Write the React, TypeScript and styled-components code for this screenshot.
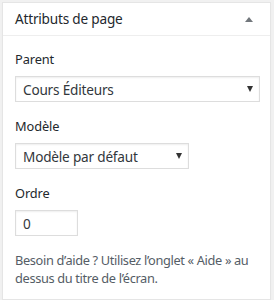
import styled, { createGlobalStyle } from 'styled-components'

const Global = createGlobalStyle`
    html, body {
        margin: 0;
        background: #f1f1f1;
    }
    body {
        font-family: "Noto Sans", "Open Sans", sans-serif;
        font-size: 13px;
        color: #23282d;
    }
`

export default function App() {
    return (
        <>
            <Global />
            <Page>
                <Box>
                    <Header>
                        <Title>Attributs de page</Title>
                        <Toggle aria-label="Replier" />
                    </Header>
                    <Inside>
                        <Label>Parent</Label>
                        <Select $width={245}>
                            <span>Cours Éditeurs</span>
                            <Caret />
                        </Select>
                        <Label>Modèle</Label>
                        <Select $width={174}>
                            <span>Modèle par défaut</span>
                            <Caret />
                        </Select>
                        <Label>Ordre</Label>
                        <NumberInput>0</NumberInput>
                        <Help>Besoin d’aide ? Utilisez l’onglet « Aide » au dessus du titre de l’écran.</Help>
                    </Inside>
                </Box>
            </Page>
        </>
    )
}

const Page = styled.div`
    padding: 2px 3px 3px 2px;
`

const Box = styled.div`
    background: #fff;
    border: 1px solid #e5e5e5;
    box-shadow: 0 1px 1px rgba(0, 0, 0, 0.04);
`

const Header = styled.div`
    display: flex;
    align-items: center;
    justify-content: space-between;
    height: 32px;
    padding: 0 12px;
    border-bottom: 1px solid #eee;
`

const Title = styled.h2`
    margin: 0;
    font-size: 13.6px;
    font-weight: 400;
    line-height: 1.4;
    letter-spacing: -0.2px;
    color: #23282d;
`

const Toggle = styled.span`
    width: 0;
    height: 0;
    margin-right: 5px;
    border-left: 4px solid transparent;
    border-right: 4px solid transparent;
    border-bottom: 5px solid #72777c;
`

const Inside = styled.div`
    display: flex;
    flex-direction: column;
    align-items: flex-start;
    padding: 14px 12px 12px;
`

const Label = styled.div`
    font-size: 12.8px;
    line-height: 18px;
    margin-bottom: 8px;
    letter-spacing: -0.1px;
    color: #23282d;
`

const Select = styled.div<{ $width: number }>`
    box-sizing: border-box;
    display: flex;
    align-items: center;
    justify-content: space-between;
    width: ${p => p.$width}px;
    height: 26px;
    padding: 0 6px 0 7px;
    margin-bottom: 15px;
    border: 1px solid #ddd;
    box-shadow: inset 0 1px 2px rgba(0, 0, 0, 0.07);
    background: #fff;
    color: #32373c;
    font-size: 13.6px;
    letter-spacing: -0.2px;
`

const Caret = styled.span`
    width: 0;
    height: 0;
    border-left: 3.5px solid transparent;
    border-right: 3.5px solid transparent;
    border-top: 6px solid #333;
`

const NumberInput = styled.div`
    box-sizing: border-box;
    width: 63px;
    height: 26px;
    padding: 0 7px;
    margin-bottom: 15px;
    display: flex;
    align-items: center;
    border: 1px solid #ddd;
    box-shadow: inset 0 1px 2px rgba(0, 0, 0, 0.07);
    color: #32373c;
    font-size: 13.6px;
`

const Help = styled.p`
    margin: 0;
    font-size: 12.8px;
    line-height: 18px;
    letter-spacing: -0.35px;
    color: #555d66;
`
